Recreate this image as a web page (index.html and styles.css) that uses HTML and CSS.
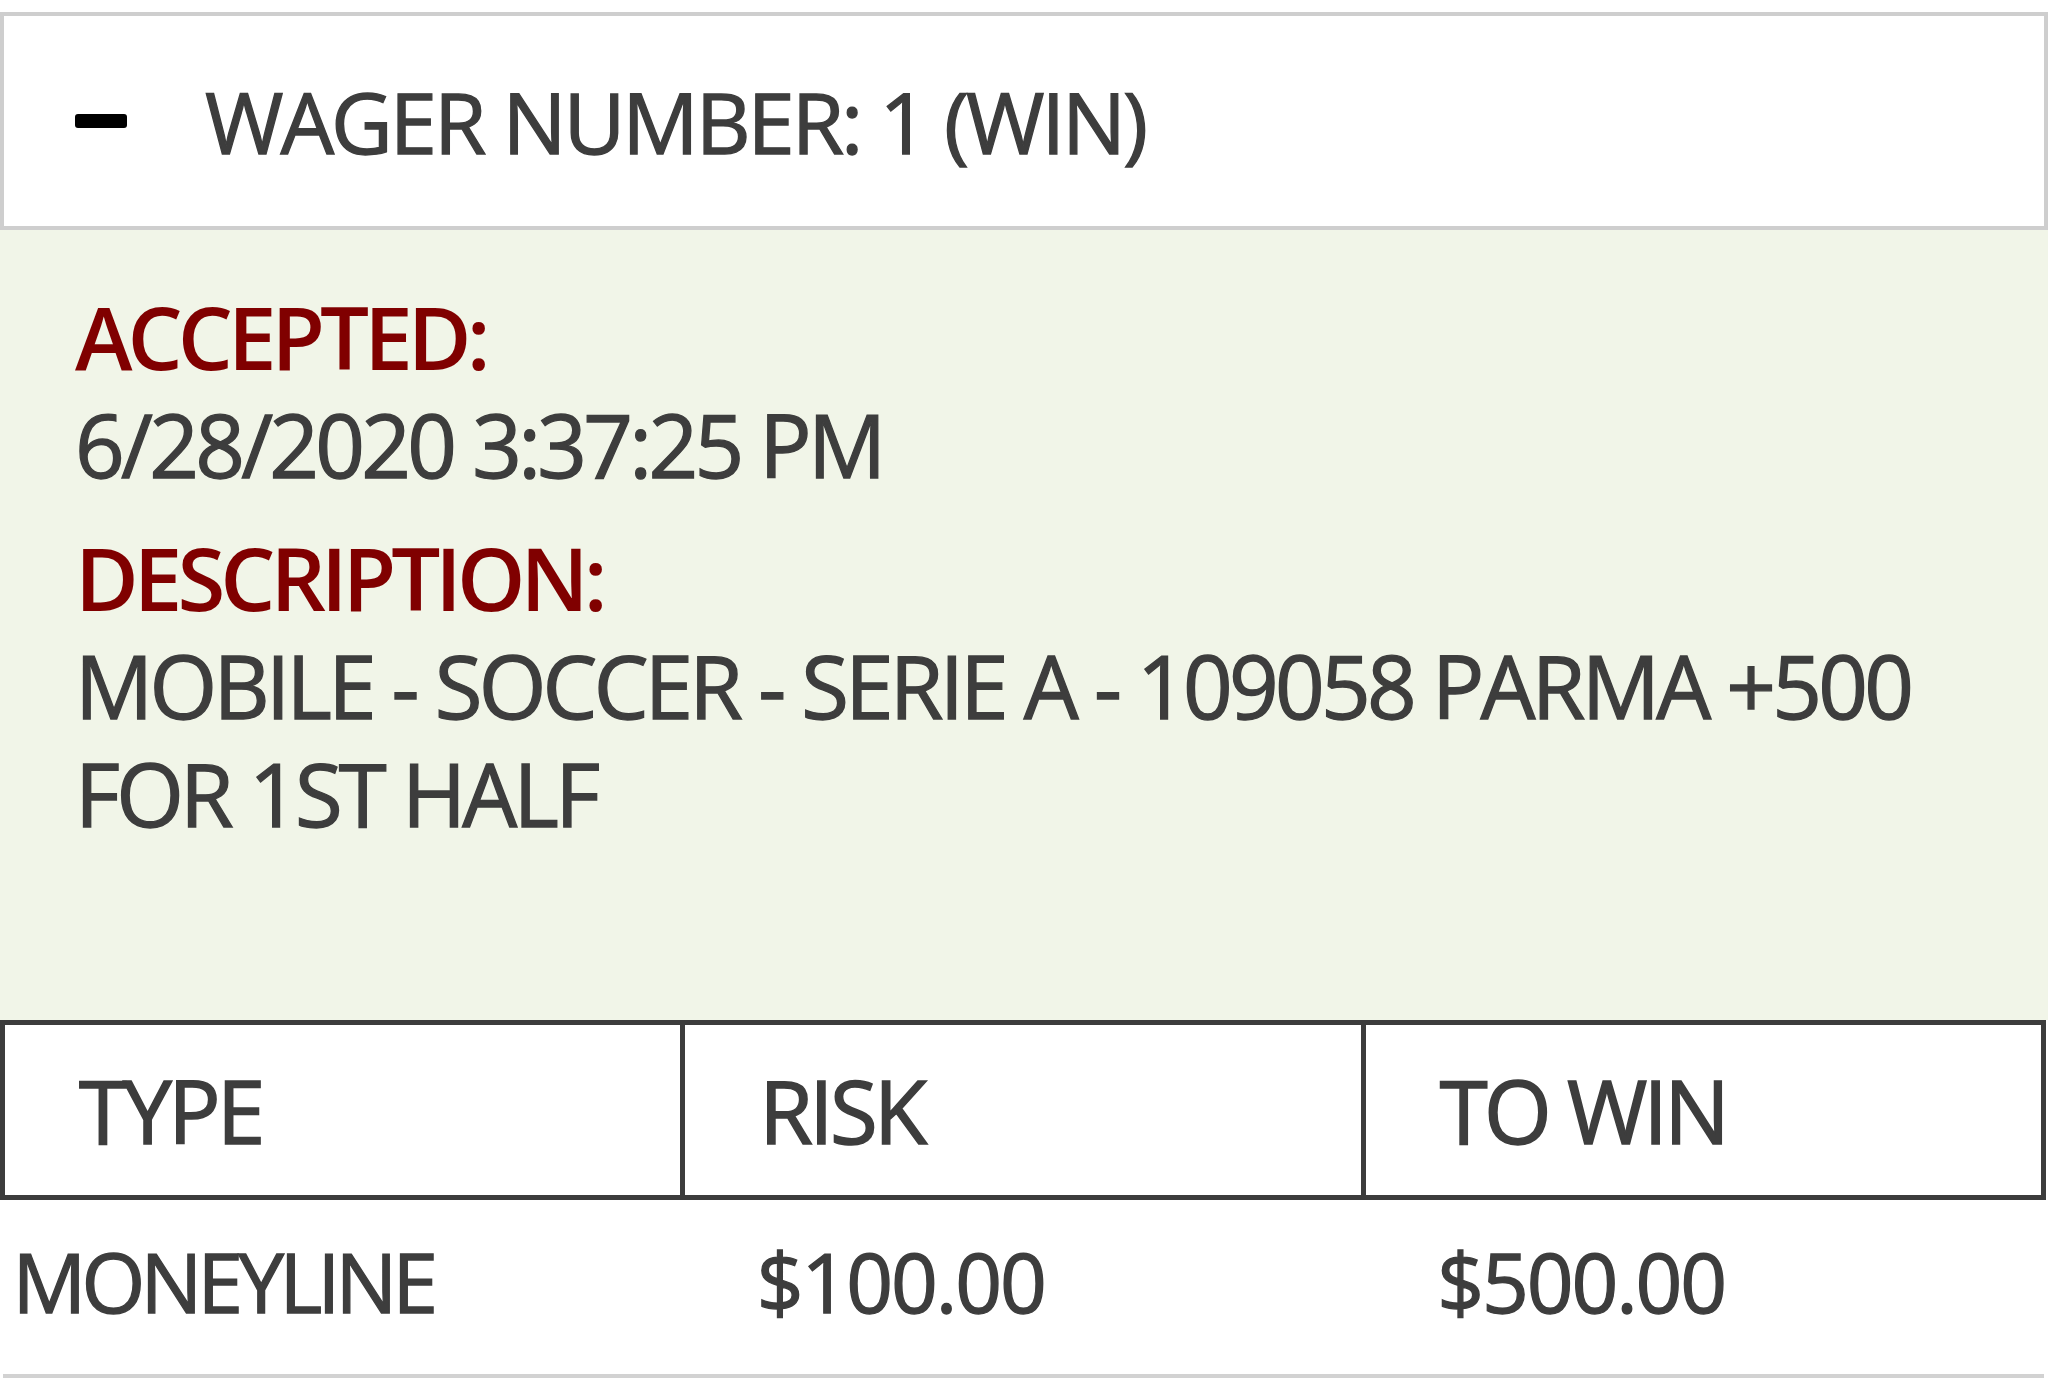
FILE: index.html
```html
<!DOCTYPE html>
<html lang="en">
<head>
<meta charset="utf-8">
<title>Wager</title>
<link rel="stylesheet" href="styles.css">
</head>
<body>
<div class="wager">
  <div class="wager-head">
    <span class="minus"></span>
    <span class="wager-title">WAGER NUMBER: 1 (WIN)</span>
  </div>
  <div class="wager-body">
    <div class="label">ACCEPTED:</div>
    <div class="value">6/28/2020 3:37:25 PM</div>
    <div class="label label-gap">DESCRIPTION:</div>
    <div class="value">MOBILE - SOCCER - SERIE A - 109058 PARMA +500 FOR 1ST HALF</div>
  </div>
  <table class="wager-table">
    <thead>
      <tr>
        <th>TYPE</th>
        <th>RISK</th>
        <th>TO WIN</th>
      </tr>
    </thead>
    <tbody>
      <tr>
        <td class="first">MONEYLINE</td>
        <td>$100.00</td>
        <td>$500.00</td>
      </tr>
    </tbody>
  </table>
</div>
</body>
</html>
```
FILE: styles.css
```css
html, body {
  margin: 0;
  padding: 0;
  background: #ffffff;
}
body {
  font-family: "Open Sans", "Liberation Sans", sans-serif;
  color: #3d3d3d;
  font-stretch: 92%;
}
.wager {
  padding-top: 12px;
  width: 2048px;
}
.wager-head {
  display: flex;
  align-items: center;
  height: 210px;
  border: 4px solid #cecece;
  padding-left: 71px;
  background: #ffffff;
}
.minus {
  display: block;
  width: 52px;
  height: 14px;
  background: #000000;
  border-radius: 3px;
  margin-right: 78px;
}
.wager-title {
  font-size: 85px;
  line-height: 1;
  font-weight: 400;
  letter-spacing: -0.036em;
  -webkit-text-stroke: 1.3px #3d3d3d;
  color: #3d3d3d;
}
.wager-body {
  background: #f1f5e8;
  padding: 52px 74px 173px 75px;
}
.label {
  color: #800000;
  font-size: 87px;
  font-weight: 600;
  line-height: 108px;
  letter-spacing: -0.057em;
}
.label-gap {
  margin-top: 25px;
}
.value {
  font-size: 87px;
  font-weight: 400;
  line-height: 108px;
  letter-spacing: -0.043em;
  -webkit-text-stroke: 1.3px #3d3d3d;
  color: #3d3d3d;
}
.wager-table {
  width: 2046px;
  border-collapse: collapse;
  table-layout: fixed;
  border-bottom: 4px solid #d2d2d2;
}
.wager-table th {
  border: 5px solid #3c3c3c;
  height: 170px;
  padding: 0 0 0 74px;
  text-align: left;
  font-size: 87px;
  font-weight: 400;
  letter-spacing: -0.042em;
  -webkit-text-stroke: 1.5px #3d3d3d;
  vertical-align: middle;
}
.wager-table td {
  height: 162px;
  padding: 0 0 12px 74px;
  font-size: 82px;
  font-weight: 400;
  letter-spacing: -0.026em;
  -webkit-text-stroke: 1.3px #3d3d3d;
  vertical-align: middle;
}
.wager-table td.first {
  padding-left: 10px;
  letter-spacing: -0.058em;
}
```
